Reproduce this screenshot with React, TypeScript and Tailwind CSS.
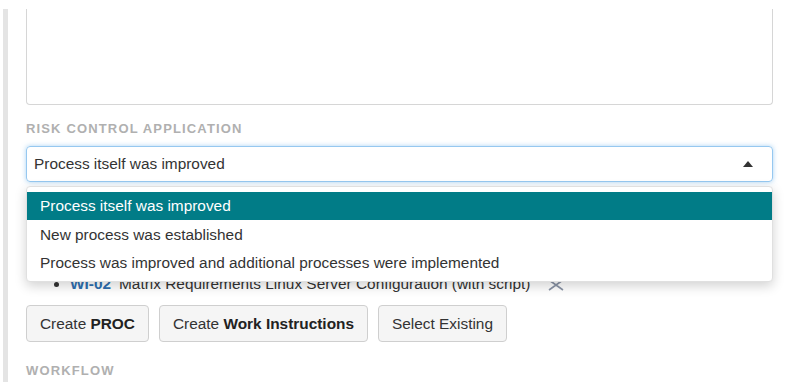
import { useState } from "react";

const options = [
  "Process itself was improved",
  "New process was established",
  "Process was improved and additional processes were implemented",
];

function SectionLabel({ children }: { children: React.ReactNode }) {
  return (
    <p className="text-[13px] font-bold uppercase leading-4 tracking-[1.15px] text-[#b0b0b0]">
      {children}
    </p>
  );
}

export default function App() {
  const [selected] = useState(0);

  return (
    <div
      className="h-[382px] w-[794px] overflow-hidden bg-white pl-[3px] text-[#333]"
      style={{ fontFamily: '"Liberation Sans", Arial, sans-serif' }}
    >
      <div className="h-full border-l-[5px] border-[#e4e4e4] pl-[18px] pr-[21px]">
        <div className="mt-[9px] h-[96px] rounded-b border border-t-0 border-[#d6d6d6]" />

        <div className="mt-[16px]">
          <SectionLabel>Risk Control Application</SectionLabel>
        </div>

        <div className="relative mt-[9px]">
          <div className="flex h-[36px] items-center justify-between rounded border border-[#96c8f0] pl-[7px] pr-[19px] text-[15.4px] shadow-[0_0_5px_rgba(102,175,233,0.55)]">
            <span>{options[selected]}</span>
            <svg width="10" height="6" viewBox="0 0 10 6" className="mt-[-1px]">
              <path d="M0 6 L5 0 L10 6 Z" fill="#333" />
            </svg>
          </div>

          <ul className="absolute left-0 right-0 top-[40px] z-10 rounded border border-[#e0e0e0] bg-white py-[5px] text-[15.4px] shadow-[0_4px_12px_rgba(0,0,0,0.18)]">
            {options.map((opt, i) => (
              <li
                key={opt}
                className={
                  i === selected
                    ? "flex h-[28px] items-center bg-[#017c87] px-[13px] text-white"
                    : "flex h-[28px] items-center px-[13px] pt-[1px] text-[#333]"
                }
              >
                {opt}
              </li>
            ))}
          </ul>
        </div>

        <ul className="mt-[92px] list-disc pl-[44px] text-[15.4px] leading-5">
          <li>
            <span className="mr-[8px] font-bold text-[#2f6fb0]">WI-02</span>
            <span>Matrix Requirements Linux Server Configuration (with script)</span>
            <svg width="18" height="12" viewBox="0 0 18 12" className="ml-[17px] inline-block align-middle">
              <path d="M2 1 L16 11 M16 1 L2 11" stroke="#8a94a6" strokeWidth="1.6" fill="none" />
            </svg>
          </li>
        </ul>

        <div className="mt-[11px] flex gap-[10px] text-[15.4px]">
          <button className="h-[37px] rounded border border-[#cfcfcf] bg-[#f5f5f5] px-[13px] text-[#333]">
            Create <b className="text-[#222]">PROC</b>
          </button>
          <button className="h-[37px] rounded border border-[#cfcfcf] bg-[#f5f5f5] px-[13px] text-[#333]">
            Create <b className="text-[#222]">Work Instructions</b>
          </button>
          <button className="h-[37px] rounded border border-[#cfcfcf] bg-[#f5f5f5] px-[13px] text-[#333]">
            Select Existing
          </button>
        </div>

        <div className="mt-[21px]">
          <SectionLabel>Workflow</SectionLabel>
        </div>
      </div>
    </div>
  );
}
